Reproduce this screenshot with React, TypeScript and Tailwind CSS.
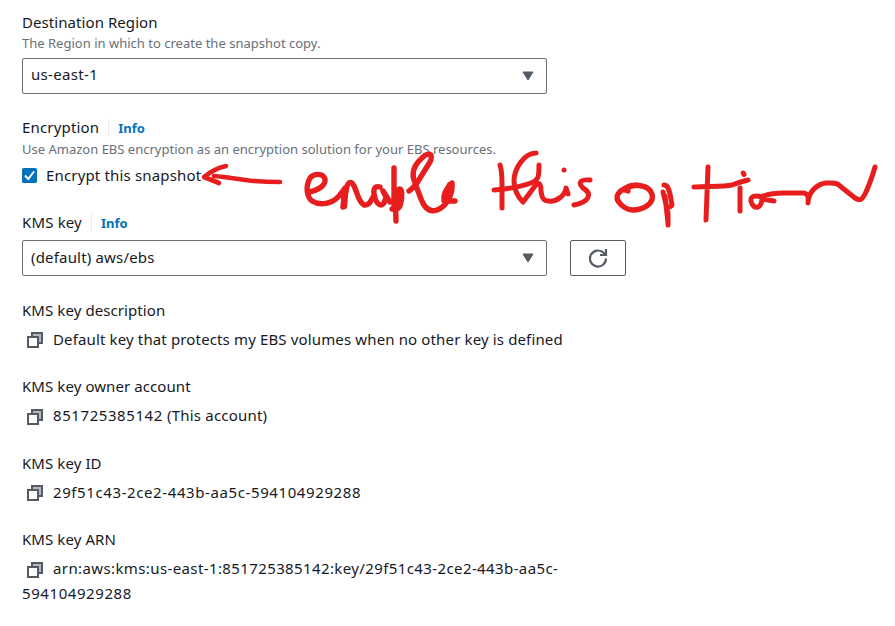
import type { ReactNode } from "react";

function CopyIcon({ className = "mt-[3px]" }: { className?: string }) {
  return (
    <svg className={`${className} ml-[5px] h-4 w-4 shrink-0`} viewBox="0 0 16 16" fill="none" stroke="#545b64" strokeWidth="2">
      <path d="M5 5V1h10v10h-4" fill="#b4b8bd" />
      <path d="M1 5h10v10H1z" fill="#fff" />
    </svg>
  );
}

function Caret() {
  return (
    <svg className="mr-3 h-[10px] w-3" viewBox="0 0 12 10">
      <path d="M1 1h10L6 9z" fill="#545b64" stroke="#545b64" strokeLinejoin="round" />
    </svg>
  );
}

function Select({ children }: { children: ReactNode }) {
  return (
    <div className="flex h-9 w-[525px] items-center justify-between rounded-[2px] border border-[#687078] pl-2">
      {children}
      <Caret />
    </div>
  );
}

function InfoLink() {
  return (
    <a className="ml-[9px] border-l border-[#eaeded] pl-[9px] text-[13px] leading-[18px] font-bold text-[#0073bb]">Info</a>
  );
}

function Detail({
  label,
  className,
  iconClass,
  children,
}: {
  label: ReactNode;
  className: string;
  iconClass?: string;
  children: ReactNode;
}) {
  return (
    <section className={className}>
      <h3 className="h-[29px] tracking-[0.08px]">{label}</h3>
      <div className="flex h-5">
        <CopyIcon className={iconClass} />
        <div className="ml-[10px]">{children}</div>
      </div>
    </section>
  );
}

function Annotation() {
  return (
    <svg
      className="pointer-events-none absolute top-0 left-0 h-[626px] w-[895px]"
      viewBox="0 0 895 626"
      fill="none"
      stroke="#e81e1e"
      strokeWidth="5.4"
      strokeLinecap="round"
      strokeLinejoin="round"
    >
      <g strokeWidth="4.6">
        <path d="M226 166C217 168 210 172 204 177L219 183" />
        <path d="M214 176C228 177 242 180 254 181Q266 182 280 182" />
      </g>
      <path d="M309 192C319 190 326 185 325 179C323 173 314 173 310 178C305 187 307 197 312 201C320 206 332 204 339 196L345 188L343 207L347 186Q349 181 352 183C357 188 357 201 364 205C369 206 371 201 373 197" />
      <path d="M345 190L344 206" strokeWidth="6.5" />
      <path d="M380 187C373 185 373 192 375 198C378 207 384 208 386 197L383 191L390 202" />
      <path d="M394 168L394 207M395 190L396 221M396 192C404 182 402 200 400 206Q398 210 392 209" />
      <path d="M396 192V207" strokeWidth="8" />
      <path d="M409 191Q416 186 420 178L430 162C434 153 428 152 422 158C413 166 411 174 415 183L421 199C425 210 431 212 437 210C446 207 453 195 452 183C446 188 443 195 444 201H455" />
      <path d="M450 185L446 196" strokeWidth="6.5" />
      <g strokeWidth="5">
        <path d="M500 165Q502 171 502 184V208" />
        <path d="M494 190C507 189 520 187 531 183C539 180 539 176 539 165" />
        <path d="M536 153C524 153 514 169 514 181Q514 193 523 202L535 186C539 181 541 184 541 191C542 199 544 201 549 201C556 202 565 196 566 188L568 194" />
        <path d="M564 170h.1" />
        <path d="M590 180C578 179 579 184 583 188C593 194 589 202 574 205" />
      </g>
      <path d="M625 189C630 183 649 184 652 194C655 204 642 210 633 210C625 210 614 201 618 194C621 188 631 186 636 185M625 190L628 191" />
      <path d="M664 185C668 185 669 190 670 194L672 205C670 209 667 205 667 209M663 192L668 213V225M665 196L668 223" strokeWidth="5" />
      <g strokeWidth="5">
        <path d="M708 167L706 220M694 187C707 186 724 187 732 185Q740 182 748 180M743.2 173L744 174.5M740 188V211" />
        <path d="M762 197C752 194 749 198 752 204C755 209 761 209 762 199L774 201M763 196Q772 193 784 193H803C807 193 809 196 808 203C808 191 818 184 826 183C832 183 837 182 840 186L855 198C860 201 862 200 865 194Q870 184 875 167" />
      </g>
    </svg>
  );
}

export default function App() {
  return (
    <main className="relative h-[626px] w-[895px] overflow-hidden bg-white pt-3 pl-[22px] font-['Noto_Sans',sans-serif] text-[15px] leading-5 whitespace-nowrap text-[#16191f]">
      <h2 className="h-[21px] tracking-[0.07px]">Destination Region</h2>
      <p className="h-[25px] text-[13px] tracking-[0.01px] text-[#687078]">The Region in which to create the snapshot copy.</p>
      <Select>
        <span className="-mt-1 tracking-[0.32px]">us-east-1</span>
      </Select>

      <div className="mt-[23px] flex h-[22px] items-start">
        <h2 className="tracking-[0.18px]">Encryption</h2>
        <div className="mt-0.5 flex"><InfoLink /></div>
      </div>
      <p className="h-[26px] text-[13px] tracking-[0.005px] text-[#687078]">Use Amazon EBS encryption as an encryption solution for your EBS resources.</p>
      <label className="flex h-[47px] items-start">
        <svg className="mt-[3px] mr-[9px] h-[15px] w-[15px]" viewBox="0 0 15 15">
          <rect width="15" height="15" rx="1.5" fill="#0073bb" />
          <path d="M3 7.5L6.3 11L12 3.5" fill="none" stroke="#fff" strokeWidth="2" />
        </svg>
        <span className="tracking-[0.16px]">Encrypt this snapshot</span>
      </label>

      <div className="flex h-7 items-start">
        <h2 className="tracking-[0.15px]">KMS key</h2>
        <div className="mt-0.5 flex"><InfoLink /></div>
      </div>
      <div className="flex gap-[23px]">
        <Select>
          <span className="-mt-0.5 tracking-[0.18px]">(default) aws/ebs</span>
        </Select>
        <button className="flex h-9 w-14 items-center justify-center rounded-[2px] border border-[#545b64]">
          <svg className="h-5 w-5" viewBox="0 0 20 20" fill="none" stroke="#545b64" strokeWidth="2.2">
            <path d="M18 10.5A8 8 0 1 1 14.6 4L17 6" />
            <path d="M18 1V7H12" />
          </svg>
        </button>
      </div>

      <Detail className="mt-6" label="KMS key description">
        <span className="tracking-[0.14px]">Default key that protects my EBS volumes when no other key is defined</span>
      </Detail>
      <Detail className="mt-[27px]" iconClass="mt-1" label="KMS key owner account">
        <span className="tracking-[0.58px]">851725385142</span>
        <span className="tracking-[0.2px]"> (This account)</span>
      </Detail>
      <Detail className="mt-7" label="KMS key ID">
        <span className="tracking-[0.6px]">29f51c43-2ce2-443b-aa5c-594104929288</span>
      </Detail>
      <Detail className="mt-[27px]" iconClass="mt-1" label="KMS key ARN">
        <span className="tracking-[0.39px]">arn:aws:kms:us-east-1:851725385142:key/29f51c43-2ce2-443b-aa5c-</span>
      </Detail>
      <p className="mt-[5px] tracking-[0.58px]">594104929288</p>

      <Annotation />
    </main>
  );
}
